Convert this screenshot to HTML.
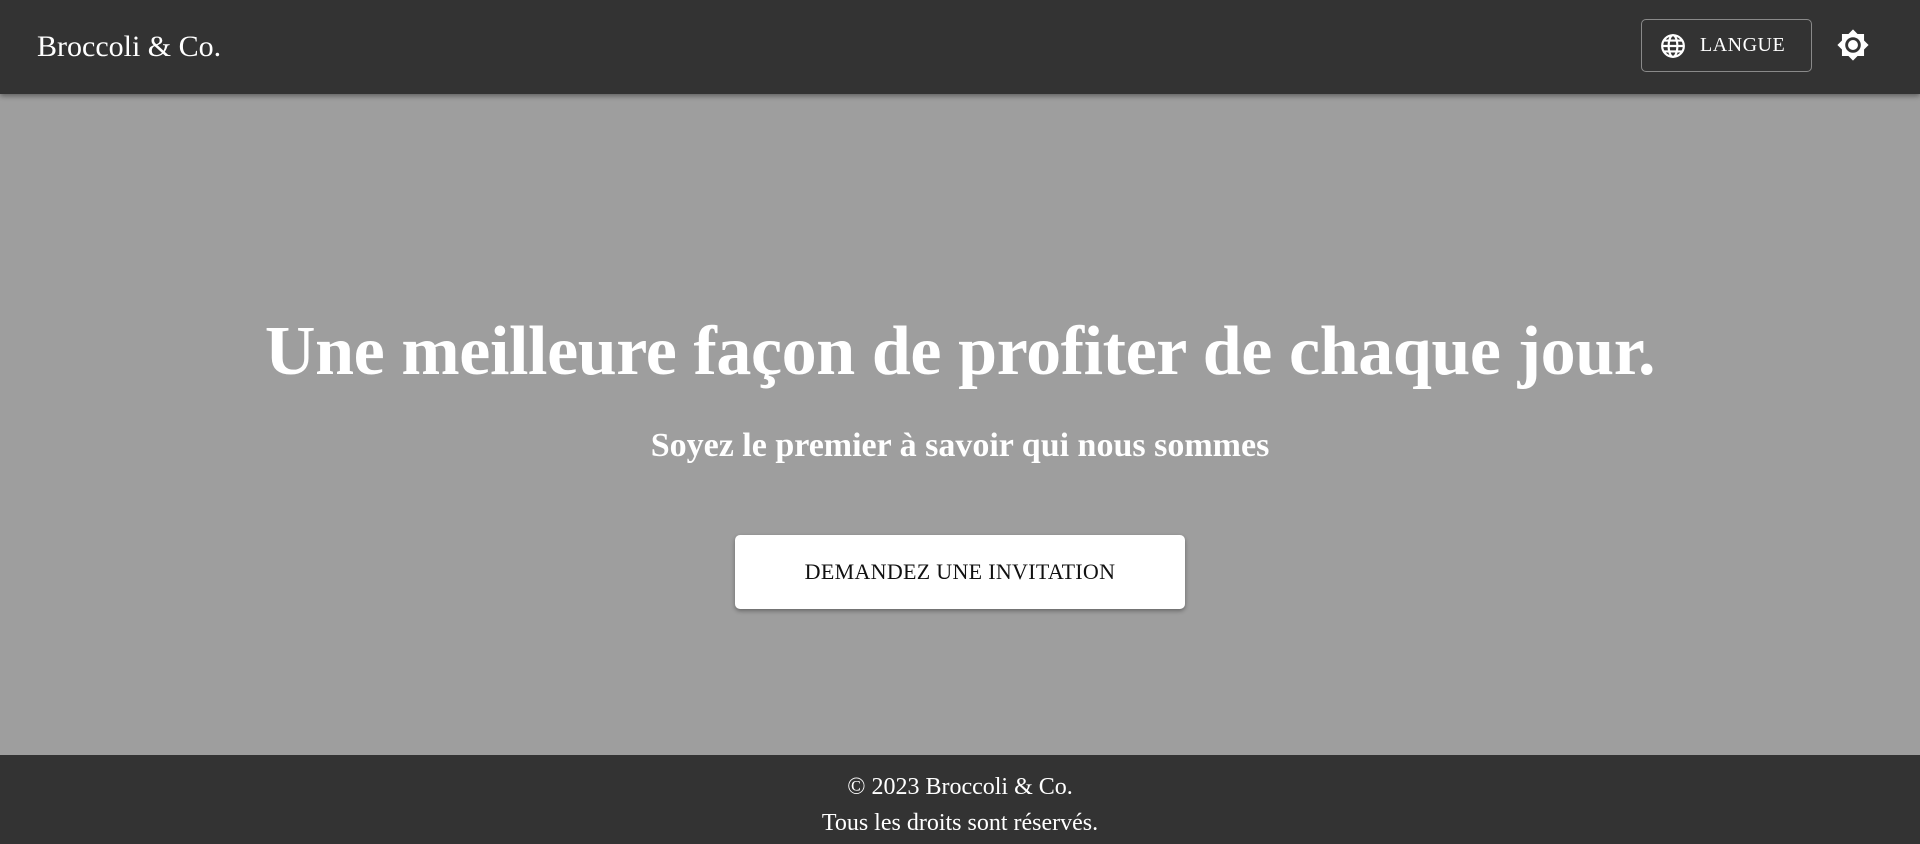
<!DOCTYPE html>
<html><head><meta charset="utf-8"><style>
*{margin:0;padding:0;box-sizing:border-box}
body{width:1920px;height:844px;background:#9e9e9e;font-family:"Liberation Serif",serif;overflow:hidden;position:relative}
header{position:absolute;left:0;top:0;width:1920px;height:94px;background:#333;box-shadow:0 2px 5px rgba(0,0,0,.4);z-index:2}
.logo{position:absolute;left:37px;top:30px;color:#fff;font-size:30px}
.lang{position:absolute;left:1641px;top:19px;width:171px;height:53px;border:1px solid #8a8a8a;border-radius:5px;color:#fff;font-size:20px}
.lang svg{position:absolute;left:18px;top:13px}
.lang span{position:absolute;left:58px;top:14px;letter-spacing:.5px}
.sun{position:absolute;left:1836px;top:28px}
h1{position:absolute;left:0;width:1920px;top:312px;text-align:center;color:#fff;font-size:70px;font-weight:bold;letter-spacing:-0.4px}
h2{position:absolute;left:0;width:1920px;top:427px;text-align:center;color:#fff;font-size:34px;font-weight:bold}
.btn{position:absolute;left:735px;top:535px;width:450px;height:74px;background:#fff;border-radius:5px;box-shadow:0 2px 4px rgba(0,0,0,.35);text-align:center;line-height:74px;font-size:22px;color:#111;letter-spacing:.3px}
footer{position:absolute;left:0;top:755px;width:1920px;height:89px;background:#333;color:#fff;text-align:center;font-size:24px}
footer p{position:absolute;width:100%}
</style></head><body>
<header>
<div class="logo">Broccoli &amp; Co.</div>
<div class="lang"><svg width="26" height="26" viewBox="0 0 24 24" fill="none" stroke="#fff" stroke-width="2"><circle cx="12" cy="12" r="10"/><ellipse cx="12" cy="12" rx="4" ry="10"/><path d="M2 12h20M3.5 7h17M3.5 17h17"/></svg><span>LANGUE</span></div>
<svg class="sun" width="34" height="34" viewBox="0 0 24 24"><path fill="#fff" d="M12 1l3.2 3.2h4.6v4.6L23 12l-3.2 3.2v4.6h-4.6L12 23l-3.2-3.2H4.2v-4.6L1 12l3.2-3.2V4.2h4.6z"/><circle cx="12" cy="12" r="5.5" fill="#333"/><circle cx="12" cy="12" r="3.5" fill="#fff"/></svg>
</header>
<h1>Une meilleure façon de profiter de chaque jour.</h1>
<h2>Soyez le premier à savoir qui nous sommes</h2>
<div class="btn">DEMANDEZ UNE INVITATION</div>
<footer><p style="top:19px">© 2023 Broccoli &amp; Co.</p><p style="top:55px">Tous les droits sont réservés.</p></footer>
</body></html>
